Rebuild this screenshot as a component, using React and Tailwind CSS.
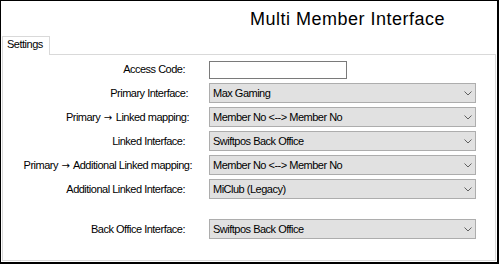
import { useState } from 'react';

const Chevron = () => (
    <svg width="8" height="5" viewBox="0 0 8 5" className="shrink-0">
        <path d="M0.5 0.5 L4 4 L7.5 0.5" fill="none" stroke="#606060" strokeWidth="1" />
    </svg>
);

const Arrow = () => <span className="font-['DejaVu_Sans',sans-serif] tracking-normal text-[10px] mx-[1px]">→</span>;

const Combo = ({ value }) => (
    <div className="w-[267px] h-[20px] bg-[#e1e1e1] border border-[#adadad] flex items-center justify-between pl-[3px] pr-[3px]">
        <span className="whitespace-nowrap leading-none">{value}</span>
        <Chevron />
    </div>
);

const Row = ({ label, pr, children, className = '' }) => (
    <div className={`flex h-[20px] items-center ${className}`}>
        <div className="w-[206px] shrink-0 text-right whitespace-nowrap leading-none" style={{ paddingRight: pr }}>
            {label}
        </div>
        {children}
    </div>
);

const App = () => {
    const [accessCode, setAccessCode] = useState('');

    return (
        <div className="w-[499px] h-[264px] bg-white border-black border-l border-t border-r-2 border-b-2 flex flex-col pl-px pr-px pb-px font-['Liberation_Sans',Arial,sans-serif] text-black overflow-hidden">
            <div className="h-[35px] shrink-0 pl-[248px] pt-[9px] text-[18px] leading-[18px] tracking-[0.5px] whitespace-nowrap">
                Multi Member Interface
            </div>

            <div className="flex h-[19px] shrink-0">
                <div className="w-[48px] h-[19px] border-l border-t border-r border-[#d9d9d9] pl-[4px] pt-px text-[11px] leading-[13px] tracking-[-0.5px]">
                    Settings
                </div>
                <div className="flex-1 border-b border-[#d9d9d9]" />
            </div>

            <div className="flex-1 border-l border-r border-b border-[#d9d9d9] flex flex-col gap-[4px] pt-[4px] text-[11px] tracking-[-0.5px]">
                <Row label="Access Code:" pr={24}>
                    <input
                        value={accessCode}
                        onChange={(e) => setAccessCode(e.target.value)}
                        className="w-[138px] h-[18px] mt-[2px] bg-white border border-[#7a7a7a] outline-none px-[2px] text-[11px]"
                    />
                </Row>
                <Row label="Primary Interface:" pr={21}>
                    <Combo value="Max Gaming" />
                </Row>
                <Row label={<>Primary <Arrow /> Linked mapping:</>} pr={20}>
                    <Combo value="Member No <--> Member No" />
                </Row>
                <Row label="Linked Interface:" pr={24}>
                    <Combo value="Swiftpos Back Office" />
                </Row>
                <Row label={<>Primary <Arrow /> Additional Linked mapping:</>} pr={17}>
                    <Combo value="Member No <--> Member No" />
                </Row>
                <Row label="Additional Linked Interface:" pr={24}>
                    <Combo value="MiClub (Legacy)" />
                </Row>
                <Row label="Back Office Interface:" pr={24} className="mt-[16px]">
                    <Combo value="Swiftpos Back Office" />
                </Row>
            </div>
        </div>
    );
};

export default App;
